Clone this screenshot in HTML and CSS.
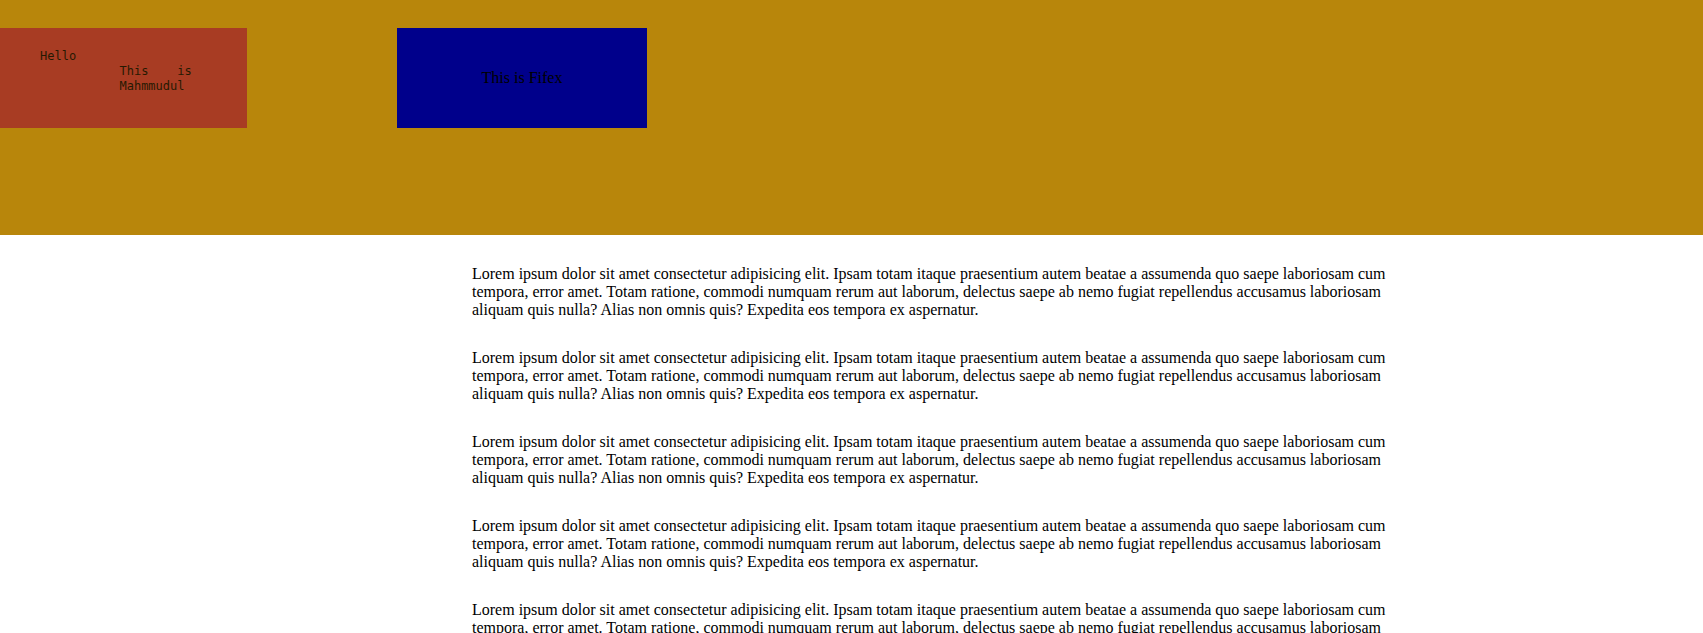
FILE: index.html
```html
<!DOCTYPE html>
<html lang="en">
<head>
<meta charset="utf-8">
<title>Header</title>
<link rel="stylesheet" href="styles.css">
</head>
<body>
<header class="header">
  <div class="box box-red">
<pre class="greeting">Hello
           This    is
           Mahmmudul</pre>
  </div>
  <div class="box box-blue"><span class="fifex">This is Fifex</span></div>
</header>
<main class="content">
  <p>Lorem ipsum dolor sit amet consectetur adipisicing elit. Ipsam totam itaque praesentium autem beatae a assumenda quo saepe laboriosam cum tempora, error amet. Totam ratione, commodi numquam rerum aut laborum, delectus saepe ab nemo fugiat repellendus accusamus laboriosam aliquam quis nulla? Alias non omnis quis? Expedita eos tempora ex aspernatur.</p>
  <p>Lorem ipsum dolor sit amet consectetur adipisicing elit. Ipsam totam itaque praesentium autem beatae a assumenda quo saepe laboriosam cum tempora, error amet. Totam ratione, commodi numquam rerum aut laborum, delectus saepe ab nemo fugiat repellendus accusamus laboriosam aliquam quis nulla? Alias non omnis quis? Expedita eos tempora ex aspernatur.</p>
  <p>Lorem ipsum dolor sit amet consectetur adipisicing elit. Ipsam totam itaque praesentium autem beatae a assumenda quo saepe laboriosam cum tempora, error amet. Totam ratione, commodi numquam rerum aut laborum, delectus saepe ab nemo fugiat repellendus accusamus laboriosam aliquam quis nulla? Alias non omnis quis? Expedita eos tempora ex aspernatur.</p>
  <p>Lorem ipsum dolor sit amet consectetur adipisicing elit. Ipsam totam itaque praesentium autem beatae a assumenda quo saepe laboriosam cum tempora, error amet. Totam ratione, commodi numquam rerum aut laborum, delectus saepe ab nemo fugiat repellendus accusamus laboriosam aliquam quis nulla? Alias non omnis quis? Expedita eos tempora ex aspernatur.</p>
  <p>Lorem ipsum dolor sit amet consectetur adipisicing elit. Ipsam totam itaque praesentium autem beatae a assumenda quo saepe laboriosam cum tempora, error amet. Totam ratione, commodi numquam rerum aut laborum, delectus saepe ab nemo fugiat repellendus accusamus laboriosam aliquam quis nulla? Alias non omnis quis? Expedita eos tempora ex aspernatur.</p>
  <p>Lorem ipsum dolor sit amet consectetur adipisicing elit. Ipsam totam itaque praesentium autem beatae a assumenda quo saepe laboriosam cum tempora, error amet. Totam ratione, commodi numquam rerum aut laborum, delectus saepe ab nemo fugiat repellendus accusamus laboriosam aliquam quis nulla? Alias non omnis quis? Expedita eos tempora ex aspernatur.</p>
</main>
</body>
</html>
```

FILE: styles.css
```css
html, body {
  margin: 0;
  padding: 0;
  background: #ffffff;
}

body {
  font-family: "Liberation Serif", "Times New Roman", serif;
  font-size: 16px;
  color: #000000;
}

.header {
  height: 235px;
  box-sizing: border-box;
  padding-top: 28px;
  background: #b8860b;
  display: flex;
  align-items: flex-start;
  gap: 150px;
}

.box {
  height: 100px;
  box-sizing: border-box;
}

.box-red {
  width: 247px;
  background: #a52a2a;
  opacity: 0.8;
  padding: 21px 0 0 40px;
}

.greeting {
  margin: 0;
  font-family: "DejaVu Sans Mono", "Liberation Mono", monospace;
  font-size: 12px;
  line-height: 15px;
  color: #000000;
}

.box-blue {
  width: 250px;
  background: #00008b;
  display: flex;
  align-items: center;
  justify-content: center;
}

.fifex {
  color: #000000;
  font-size: 16px;
  line-height: 18px;
}

.content {
  width: 930px;
  margin-left: 472px;
}

.content p {
  margin: 30px 0;
  line-height: 18px;
}
```
